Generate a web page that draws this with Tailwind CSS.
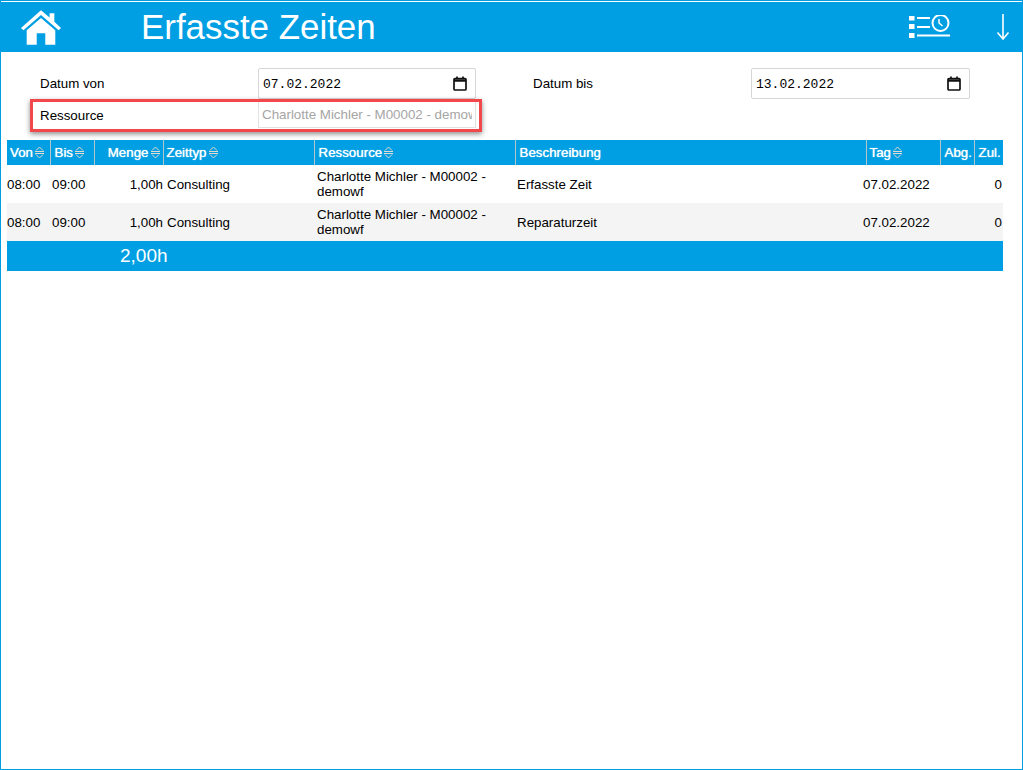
<!DOCTYPE html>
<html lang="de">
<head>
  <meta charset="UTF-8"/>
  <title>Erfasste Zeiten</title>
  <script src="https://cdn.jsdelivr.net/npm/@tailwindcss/browser@4"></script>
</head>
<body class="bg-white font-['Liberation_Sans',sans-serif] text-[13.33px] text-black">
  <div class="relative w-[1023px] h-[770px] overflow-hidden border-x border-b border-t border-[#009fe3] pt-px">

    <!-- Header -->
    <header class="flex items-center h-[50px] bg-[#009fe3] text-white">
      <svg class="ml-[20px] w-[40px] h-[37px]" viewBox="0 0 42 38" fill="#fff">
        <path d="M21 1 L30 8.5 V4 H35 V13 L42 19.5 L39.5 22 L21 6 L2.5 22 L0 19.5 Z"/>
        <path d="M21 9 L36 22 V37 H25.5 V25 H16.5 V37 H6 V22 Z"/>
      </svg>
      <h1 class="ml-[80px] text-[34.9px] leading-none">Erfasste Zeiten</h1>
      <div class="ml-auto flex items-center">
        <svg class="w-[41px] h-[24px]" viewBox="0 0 41 24" fill="none" stroke="#fff">
          <path fill="#fff" stroke="none" d="M0 1h5.500v4.500H0zM0 9h5.500v5H0zM0 18h5.500v5H0z"/>
          <path stroke-width="2" d="M8 3h13M8 12h13M8 20.500h33"/>
          <circle cx="31.500" cy="8" r="8" stroke-width="2"/>
          <path stroke-width="1.500" d="M30 4v4l3.500 3"/>
        </svg>
        <svg class="ml-[46px] mr-[12px] w-[14px] h-[28px]" viewBox="0 0 14 28" fill="none" stroke="#fff" stroke-width="1.600">
          <path d="M7 1v25M1.500 19.500 7 26l5.500-6.500"/>
        </svg>
      </div>
    </header>

    <!-- Filter -->
    <div class="flex flex-col gap-px pt-4 pl-[39px]">
      <div class="flex items-center h-[31px]">
        <label class="w-[218px]">Datum von</label>
        <div class="flex items-center justify-between w-[218px] h-[31px] pl-[4px] pr-[8px] border border-[#d6d6d6] rounded-[2px] font-['Liberation_Mono',monospace] text-[13px]">
          <span class="pt-[2px]">07.02.2022</span>
          <svg class="w-[14px] h-[15px]" viewBox="0 0 14 15" fill="none" stroke="#111">
            <rect x="1" y="2.500" width="12" height="11.500" rx="1" stroke-width="1.700"/>
            <path stroke-width="2.500" d="M1 4.500h12"/>
            <path stroke-width="1.700" d="M4 0.500v2M10 0.500v2"/>
          </svg>
        </div>
        <label class="ml-[57px] w-[218px]">Datum bis</label>
        <div class="flex items-center justify-between w-[219px] h-[31px] pl-[4px] pr-[8px] border border-[#d6d6d6] rounded-[2px] font-['Liberation_Mono',monospace] text-[13px]">
          <span class="pt-[2px]">13.02.2022</span>
          <svg class="w-[14px] h-[15px]" viewBox="0 0 14 15" fill="none" stroke="#111">
            <rect x="1" y="2.500" width="12" height="11.500" rx="1" stroke-width="1.700"/>
            <path stroke-width="2.500" d="M1 4.500h12"/>
            <path stroke-width="1.700" d="M4 0.500v2M10 0.500v2"/>
          </svg>
        </div>
      </div>
      <div class="flex items-center h-[28px]">
        <label class="w-[218px] pt-[3px]">Ressource</label>
        <div class="w-[218px] h-[28px] pl-[3px] pr-[3px] leading-[28px] border border-[#e2e2e2] text-[#a5a5a5]">
          <div class="overflow-hidden whitespace-nowrap">Charlotte Michler - M00002 - demowf</div>
        </div>
      </div>
    </div>

    <!-- Annotation -->
    <div class="absolute left-[29px] top-[98px] w-[452px] h-[33px] border-[3px] border-[#f2484b] shadow-[0_2px_5px_rgba(0,0,0,0.45)] pointer-events-none"></div>

    <!-- Table -->
    <table class="mt-[12px] ml-[6px] w-[996px] table-fixed border-collapse">
      <colgroup>
        <col class="w-[43px]"/><col class="w-[44px]"/><col class="w-[69px]"/><col class="w-[151px]"/>
        <col class="w-[201px]"/><col class="w-[351px]"/><col class="w-[74px]"/><col class="w-[34px]"/><col class="w-[29px]"/>
      </colgroup>
      <thead class="bg-[#009fe3] text-white font-normal text-left [text-shadow:0_0_1px_#fff]">
        <tr class="h-[25px]">
          <th class="font-normal pl-[3px] border-r border-[#b5c4cc] whitespace-nowrap">Von<svg class="inline-block ml-[2px] w-[9px] h-[13px] align-[-2px]" viewBox="0 0 9 13" fill="none" stroke="#e4d9cf"><path d="M1 4.500 4.500 1 8 4.500M0 5.500h9M0 7.500h9M1 8.500 4.500 12 8 8.500"/></svg></th>
          <th class="font-normal pl-[4px] border-r border-[#b5c4cc] whitespace-nowrap">Bis<svg class="inline-block ml-[2px] w-[9px] h-[13px] align-[-2px]" viewBox="0 0 9 13" fill="none" stroke="#e4d9cf"><path d="M1 4.500 4.500 1 8 4.500M0 5.500h9M0 7.500h9M1 8.500 4.500 12 8 8.500"/></svg></th>
          <th class="font-normal pr-[3px] text-right border-r border-[#b5c4cc] whitespace-nowrap">Menge<svg class="inline-block ml-[2px] w-[9px] h-[13px] align-[-2px]" viewBox="0 0 9 13" fill="none" stroke="#e4d9cf"><path d="M1 4.500 4.500 1 8 4.500M0 5.500h9M0 7.500h9M1 8.500 4.500 12 8 8.500"/></svg></th>
          <th class="font-normal pl-[3px] border-r border-[#b5c4cc] whitespace-nowrap">Zeittyp<svg class="inline-block ml-[2px] w-[9px] h-[13px] align-[-2px]" viewBox="0 0 9 13" fill="none" stroke="#e4d9cf"><path d="M1 4.500 4.500 1 8 4.500M0 5.500h9M0 7.500h9M1 8.500 4.500 12 8 8.500"/></svg></th>
          <th class="font-normal pl-[4px] border-r border-[#b5c4cc] whitespace-nowrap">Ressource<svg class="inline-block ml-[2px] w-[9px] h-[13px] align-[-2px]" viewBox="0 0 9 13" fill="none" stroke="#e4d9cf"><path d="M1 4.500 4.500 1 8 4.500M0 5.500h9M0 7.500h9M1 8.500 4.500 12 8 8.500"/></svg></th>
          <th class="font-normal pl-[4px] border-r border-[#b5c4cc]">Beschreibung</th>
          <th class="font-normal pl-[3px] border-r border-[#b5c4cc] whitespace-nowrap">Tag<svg class="inline-block ml-[2px] w-[9px] h-[13px] align-[-2px]" viewBox="0 0 9 13" fill="none" stroke="#e4d9cf"><path d="M1 4.500 4.500 1 8 4.500M0 5.500h9M0 7.500h9M1 8.500 4.500 12 8 8.500"/></svg></th>
          <th class="font-normal pl-[4px] border-r border-[#b5c4cc]">Abg.</th>
          <th class="font-normal pl-[4px]">Zul.</th>
        </tr>
      </thead>
      <tbody>
        <tr class="h-[38px]">
          <td class="pt-[2px]">08:00</td>
          <td class="pt-[2px] pl-[2px]">09:00</td>
          <td class="pt-[2px] text-right">1,00h</td>
          <td class="pt-[2px] pl-[4px]">Consulting</td>
          <td class="pl-[3px] leading-[15px]">Charlotte Michler - M00002 - demowf</td>
          <td class="pt-[2px] pl-[2px]">Erfasste Zeit</td>
          <td class="pt-[2px] pr-[11px]"><div class="-ml-[3px] text-right whitespace-nowrap">07.02.2022</div></td>
          <td></td>
          <td class="pt-[2px] text-right pr-px">0</td>
        </tr>
        <tr class="h-[38px] bg-[#f4f4f4]">
          <td class="pt-[2px]">08:00</td>
          <td class="pt-[2px] pl-[2px]">09:00</td>
          <td class="pt-[2px] text-right">1,00h</td>
          <td class="pt-[2px] pl-[4px]">Consulting</td>
          <td class="pl-[3px] leading-[15px]">Charlotte Michler - M00002 - demowf</td>
          <td class="pt-[2px] pl-[2px]">Reparaturzeit</td>
          <td class="pt-[2px] pr-[11px]"><div class="-ml-[3px] text-right whitespace-nowrap">07.02.2022</div></td>
          <td></td>
          <td class="pt-[2px] text-right pr-px">0</td>
        </tr>
      </tbody>
      <tfoot class="bg-[#009fe3] text-white text-[19px]">
        <tr class="h-[30px]">
          <td colspan="9" class="pl-[113px]">2,00h</td>
        </tr>
      </tfoot>
    </table>
  </div>
</body>
</html>
